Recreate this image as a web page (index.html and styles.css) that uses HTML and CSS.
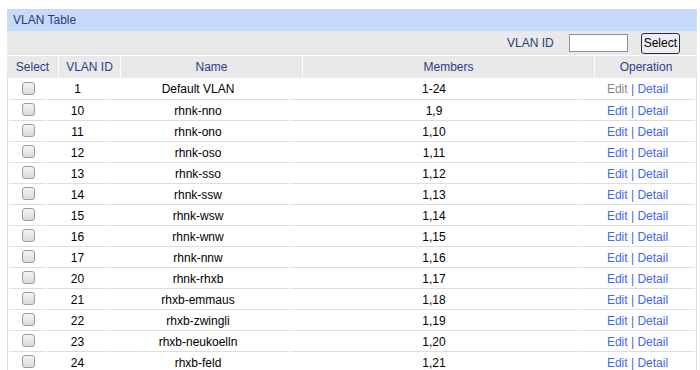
FILE: index.html
```html
<!DOCTYPE html>
<html lang="en">
<head>
    <meta charset="UTF-8">
    <title>VLAN Table</title>
    <link rel="stylesheet" href="styles.css">
</head>
<body>
    <div class="panel">
        <div class="panel-title">VLAN Table</div>

        <div class="toolbar">
            <label for="vlanId">VLAN ID</label>
            <input type="text" id="vlanId" class="search-input">
            <button class="search-btn">Select</button>
        </div>

        <div class="head-row">
            <div>Select</div>
            <div>VLAN ID</div>
            <div>Name</div>
            <div>Members</div>
            <div>Operation</div>
        </div>

        <table class="vlan-table">
            <colgroup>
                <col class="c-sel"><col class="c-id"><col class="c-name"><col class="c-mem"><col class="c-op">
            </colgroup>
            <tbody>
                <tr><td><input type="checkbox"></td><td>1</td><td>Default VLAN</td><td>1-24</td><td><span class="disabled">Edit</span> | <a href="#">Detail</a></td></tr>
                <tr><td><input type="checkbox"></td><td>10</td><td>rhnk-nno</td><td>1,9</td><td><a href="#">Edit</a> | <a href="#">Detail</a></td></tr>
                <tr><td><input type="checkbox"></td><td>11</td><td>rhnk-ono</td><td>1,10</td><td><a href="#">Edit</a> | <a href="#">Detail</a></td></tr>
                <tr><td><input type="checkbox"></td><td>12</td><td>rhnk-oso</td><td>1,11</td><td><a href="#">Edit</a> | <a href="#">Detail</a></td></tr>
                <tr><td><input type="checkbox"></td><td>13</td><td>rhnk-sso</td><td>1,12</td><td><a href="#">Edit</a> | <a href="#">Detail</a></td></tr>
                <tr><td><input type="checkbox"></td><td>14</td><td>rhnk-ssw</td><td>1,13</td><td><a href="#">Edit</a> | <a href="#">Detail</a></td></tr>
                <tr><td><input type="checkbox"></td><td>15</td><td>rhnk-wsw</td><td>1,14</td><td><a href="#">Edit</a> | <a href="#">Detail</a></td></tr>
                <tr><td><input type="checkbox"></td><td>16</td><td>rhnk-wnw</td><td>1,15</td><td><a href="#">Edit</a> | <a href="#">Detail</a></td></tr>
                <tr><td><input type="checkbox"></td><td>17</td><td>rhnk-nnw</td><td>1,16</td><td><a href="#">Edit</a> | <a href="#">Detail</a></td></tr>
                <tr><td><input type="checkbox"></td><td>20</td><td>rhnk-rhxb</td><td>1,17</td><td><a href="#">Edit</a> | <a href="#">Detail</a></td></tr>
                <tr><td><input type="checkbox"></td><td>21</td><td>rhxb-emmaus</td><td>1,18</td><td><a href="#">Edit</a> | <a href="#">Detail</a></td></tr>
                <tr><td><input type="checkbox"></td><td>22</td><td>rhxb-zwingli</td><td>1,19</td><td><a href="#">Edit</a> | <a href="#">Detail</a></td></tr>
                <tr><td><input type="checkbox"></td><td>23</td><td>rhxb-neukoelln</td><td>1,20</td><td><a href="#">Edit</a> | <a href="#">Detail</a></td></tr>
                <tr><td><input type="checkbox"></td><td>24</td><td>rhxb-feld</td><td>1,21</td><td><a href="#">Edit</a> | <a href="#">Detail</a></td></tr>
            </tbody>
        </table>
    </div>
</body>
</html>
```

FILE: styles.css
```css
* {
    margin: 0;
    padding: 0;
    box-sizing: border-box;
}

body {
    font-family: "Liberation Sans", Arial, sans-serif;
    font-size: 12px;
    color: #000;
    background: #fff;
}

.panel {
    margin: 9px 3px 0 7px;
    width: 690px;
}

.panel-title {
    height: 22px;
    line-height: 22px;
    padding-left: 6px;
    background: #c6dafc;
    color: #2b3b78;
}

.toolbar {
    height: 25px;
    background: #e9e9e9;
    display: flex;
    align-items: center;
    justify-content: flex-end;
    padding-right: 17px;
    border-bottom: 1px solid #fff;
}

.toolbar label {
    color: #2b3b78;
    margin-right: 15px;
}

.search-input {
    width: 59px;
    height: 18px;
    border: 1px solid #7f93a8;
    background: #fff;
    margin-right: 13px;
}

.search-btn {
    height: 21px;
    padding: 0 2px;
    font-family: "Liberation Sans", Arial, sans-serif;
    font-size: 12px;
    color: #000;
    background: #efefef;
    border: 1px solid #1f3156;
    border-radius: 3px;
}

.head-row {
    display: grid;
    grid-template-columns: 51px 61px 181px 291px 1fr;
    column-gap: 1px;
    background: #fff;
}

.head-row div {
    height: 22px;
    line-height: 22px;
    text-align: center;
    background: #e9e9e9;
    color: #2b3d8e;
}

.vlan-table {
    width: 690px;
    table-layout: fixed;
    border-collapse: separate;
    border-spacing: 1px 0;
    border-left: 1px solid #ddd;
    border-right: 1px solid #ddd;
}

.c-sel { width: 38px; }
.c-id { width: 59px; }
.c-name { width: 180px; }
.c-mem { width: 290px; }

.vlan-table td {
    height: 21px;
    text-align: center;
    border-bottom: 1px solid #dedede;
    padding: 1px 0 0;
}

.vlan-table tr:first-child td {
    height: 22px;
}

.vlan-table input[type="checkbox"] {
    appearance: none;
    -webkit-appearance: none;
    display: inline-block;
    width: 13px;
    height: 13px;
    vertical-align: middle;
    margin-top: -3px;
    border: 1px solid #9c9c9c;
    border-radius: 3px;
    background: linear-gradient(#f4f4f4, #d9d9d9);
}

.vlan-table td:last-child {
    color: #4466ee;
}

.vlan-table a {
    color: #4466ee;
    text-decoration: none;
}

.vlan-table .disabled {
    color: #888;
}
```
